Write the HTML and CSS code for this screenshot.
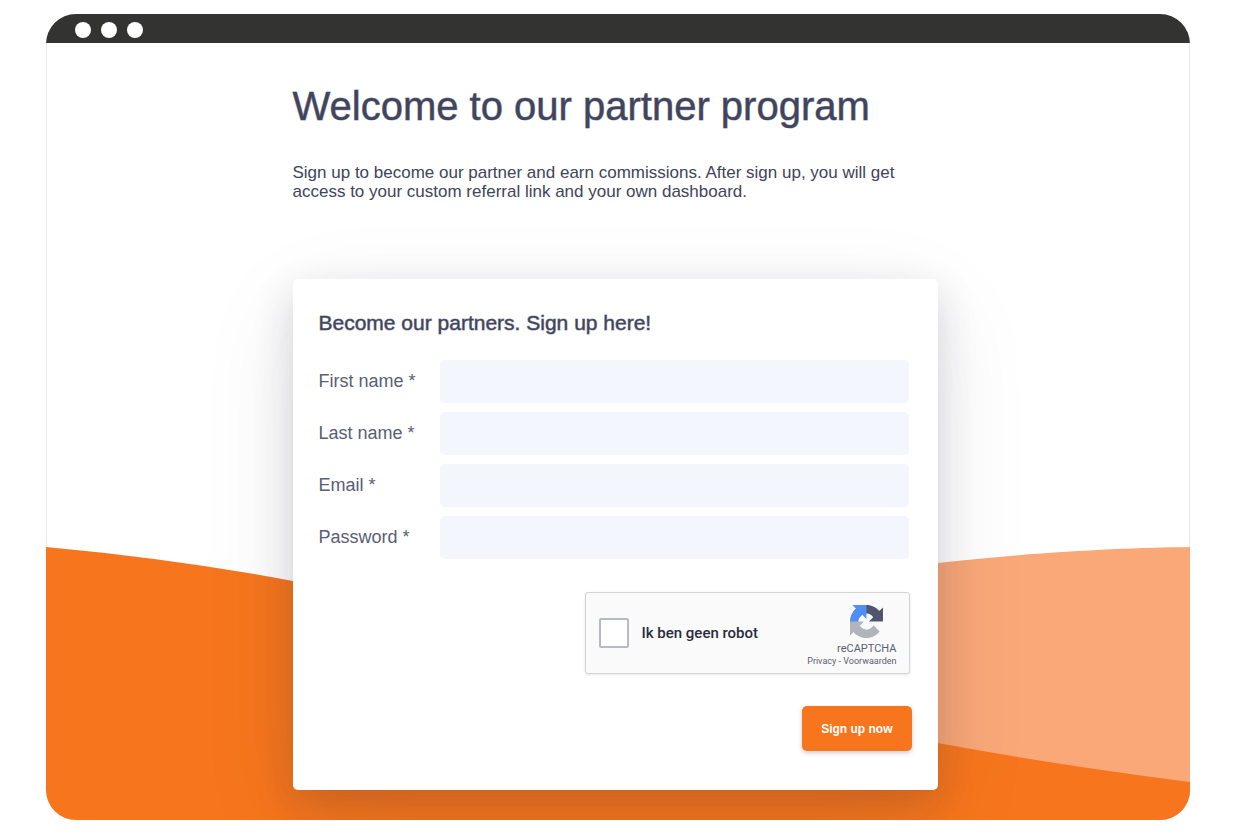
FILE: index.html
```html
<!DOCTYPE html>
<html lang="en">
  <head>
    <meta charset="UTF-8" />
    <meta name="viewport" content="width=device-width, initial-scale=1.0" />
    <title>Partner program</title>
    <link rel="stylesheet" href="styles.css">
  </head>
  <body>
    <div class="window">
      <div class="title-bar">
        <span class="dot"></span>
        <span class="dot"></span>
        <span class="dot"></span>
      </div>

      <div class="page">
        <!-- Background waves -->
        <svg class="waves" viewBox="0 0 1144 274" preserveAspectRatio="none" aria-hidden="true">
          <path fill="#faa878" d="M500 80C650 50 780 29 892 17C1000 5 1080 2 1144 1V274H500Z" />
          <path fill="#f7761d" d="M0 1Q130 13 247 35C460 76 690 161 892 197Q1010 219 1144 236V274H0Z" />
        </svg>

        <main class="content">
          <h1>Welcome to our partner program</h1>
          <p class="intro">
            Sign up to become our partner and earn commissions. After sign up,
            you will get access to your custom referral link and your own
            dashboard.
          </p>

          <form class="card">
            <h2>Become our partners. Sign up here!</h2>

            <div class="fields">
              <label for="firstName">First name *</label>
              <input type="text" id="firstName" required />
              <label for="lastName">Last name *</label>
              <input type="text" id="lastName" required />
              <label for="email">Email *</label>
              <input type="email" id="email" required />
              <label for="password">Password *</label>
              <input type="password" id="password" required />
            </div>

            <div class="captcha">
              <input type="checkbox" id="robot" />
              <label for="robot">Ik ben geen robot</label>
              <div class="captcha-brand">
                <svg class="captcha-logo" viewBox="0 0 64 64" aria-hidden="true">
                  <path fill="#50546e" d="M64 31.955l-.033-1.37V4.687l-7.16 7.16C50.948 4.674 42.033.093 32.05.093c-10.4 0-19.622 4.96-25.458 12.64l11.736 11.86a15.55 15.55 0 0 1 4.754-5.334c2.05-1.6 4.952-2.906 8.968-2.906.485 0 .86.057 1.135.163 4.976.393 9.288 3.14 11.828 7.124l-8.307 8.307L64 31.953" />
                  <path fill="#4f8ff5" d="M31.862.094l-1.37.033H4.594l7.16 7.16C4.58 13.147 0 22.06 0 32.046c0 10.4 4.96 19.622 12.64 25.458L24.5 45.768a15.55 15.55 0 0 1-5.334-4.754c-1.6-2.05-2.906-4.952-2.906-8.968 0-.485.057-.86.163-1.135.393-4.976 3.14-9.288 7.124-11.828l8.307 8.307L31.86.095" />
                  <path fill="#b1b4bb" d="M.001 32.045l.033 1.37v25.898l7.16-7.16c5.86 7.173 14.774 11.754 24.76 11.754 10.4 0 19.622-4.96 25.458-12.64l-11.736-11.86a15.55 15.55 0 0 1-4.754 5.334c-2.05 1.6-4.952 2.906-8.968 2.906-.485 0-.86-.057-1.135-.163-4.976-.393-9.288-3.14-11.828-7.124l8.307-8.307c-10.522.04-22.4.066-27.295-.005" />
                </svg>
                <div class="captcha-name">reCAPTCHA</div>
                <div class="captcha-links">
                  <a href="#">Privacy</a> - <a href="#">Voorwaarden</a>
                </div>
              </div>
            </div>

            <button type="submit" class="signup-button">Sign up now</button>
          </form>
        </main>
      </div>
    </div>
  </body>
</html>
```
FILE: styles.css
```css
* {
  box-sizing: border-box;
}

body {
  margin: 0;
  padding: 14px 56px 20px 46px;
  background-color: #fff;
  font-family: "Liberation Sans", Arial, sans-serif;
  color: #40445c;
}

.window {
  border-radius: 30px;
  overflow: hidden;
}

.title-bar {
  display: flex;
  align-items: center;
  gap: 10px;
  height: 29px;
  padding: 3px 29px 0;
  background-color: #333331;
}

.dot {
  width: 16px;
  height: 16px;
  border-radius: 50%;
  background-color: #fff;
}

.page {
  position: relative;
  padding: 40px 6px 30px 0;
  box-shadow: inset 1px 0 #ebebeb, inset -1px 0 #ebebeb;
}

.waves {
  position: absolute;
  left: 0;
  bottom: 0;
  width: 100%;
  height: 274px;
}

.content {
  position: relative;
  max-width: 645px;
  margin: 0 auto;
}

h1,
h2 {
  font-weight: normal;
  -webkit-text-stroke: 1px rgba(64, 68, 92, 0.5);
}

h1 {
  margin: 0 0 34px;
  font-size: 40px;
  line-height: 46px;
}

.intro {
  margin: 0 0 78px;
  font-size: 17px;
  line-height: 19px;
}

.card {
  display: flex;
  flex-direction: column;
  padding: 32px 26px 39px;
  border-radius: 5px;
  background-color: #fff;
  box-shadow: 0 30px 100px rgba(30, 30, 50, 0.09),
    0 14px 40px rgba(30, 30, 50, 0.16);
}

h2 {
  margin: 0 0 25px;
  font-size: 21px;
  line-height: 24px;
}

.fields {
  display: grid;
  grid-template-columns: 121px 1fr;
  gap: 9px 0;
  align-items: center;
  padding-right: 3px;
}

.fields label {
  font-size: 18px;
  color: #5a5e76;
}

.fields input {
  width: 100%;
  height: 43px;
  padding: 0 12px;
  border: none;
  border-radius: 5px;
  background-color: #f3f6fd;
  font-size: 18px;
}

.captcha {
  display: flex;
  align-items: center;
  align-self: flex-end;
  width: 325px;
  height: 82px;
  margin: 33px 2px 0 0;
  padding: 0 12px 0 13px;
  border: 1px solid #d3d4d8;
  border-radius: 3px;
  background-color: #fafafa;
  box-shadow: 0 1px 3px rgba(0, 0, 0, 0.1);
  font-family: Roboto, sans-serif;
}

.captcha input {
  appearance: none;
  width: 30px;
  height: 30px;
  margin: 0 13px 0 0;
  border: 2px solid #b8bac2;
  border-radius: 2px;
  background-color: #fff;
}

.captcha input:checked {
  background-color: #4f8ff5;
}

.captcha label {
  flex: 1;
  font-size: 15px;
  font-weight: 500;
  color: #2a2c3a;
}

.captcha-brand {
  display: flex;
  flex-direction: column;
  align-items: flex-end;
  padding-top: 6px;
  color: #5a5e70;
}

.captcha-logo {
  width: 33px;
  height: 33px;
  margin-right: 14px;
}

.captcha-name {
  margin-top: 4px;
  font-size: 11px;
  line-height: 14px;
}

.captcha-links {
  font-size: 9px;
  line-height: 11px;
}

.captcha-links a {
  color: inherit;
  text-decoration: none;
}

.signup-button {
  align-self: flex-end;
  height: 45px;
  margin-top: 32px;
  padding: 0 19px;
  border: none;
  border-radius: 5px;
  background-color: #f7761d;
  box-shadow: 0 2px 4px rgba(50, 50, 80, 0.25);
  font-family: inherit;
  font-size: 12px;
  font-weight: bold;
  color: #fff;
  cursor: pointer;
}
```
